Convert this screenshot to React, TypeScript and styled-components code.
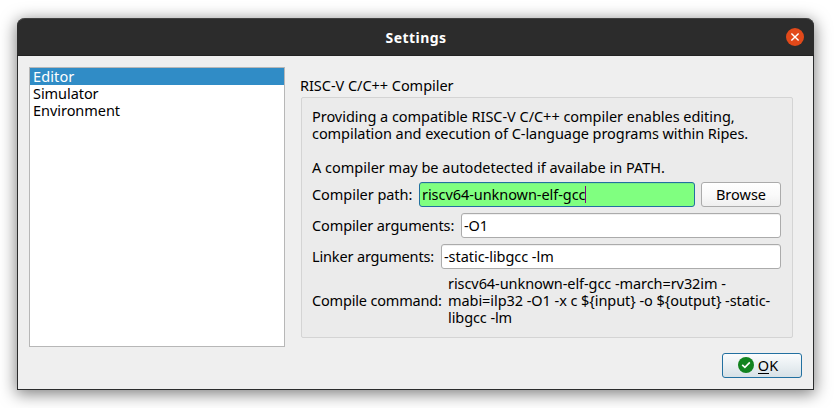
import React from "react";
import styled, { createGlobalStyle } from "styled-components";

const GlobalStyle = createGlobalStyle`
  * { box-sizing: border-box; }
  body {
    margin: 0;
    background: #fff;
    overflow: hidden;
  }
`;

const Desktop = styled.div`
  display: flex;
  width: 835px;
  height: 408px;
  padding: 18px 0 0 17px;
  overflow: hidden;
  background: #fff;
  font: 14.5px/17px "Noto Sans", sans-serif;
  color: #000;
`;

const Window = styled.main`
  display: flex;
  flex-direction: column;
  width: 797px;
  height: 372px;
  border: 1px solid #2b2c2d;
  border-top: 0;
  border-radius: 8px 8px 0 0;
  background: #efefef;
  box-shadow: 0 3px 16px 1px rgba(0, 0, 0, 0.5);
`;

const TitleBar = styled.header`
  display: grid;
  grid-template-columns: 38px 1fr 38px;
  place-items: center;
  flex: none;
  height: 38px;
  margin: 0 -1px;
  border-top: 1px solid #414141;
  border-bottom: 1px solid #222;
  border-radius: 8px 8px 0 0;
  background: #2c2c2c;
`;

const WindowTitle = styled.h1`
  grid-column: 2;
  margin: 0 0 0 1px;
  font-size: 14px;
  line-height: 17px;
  font-weight: 700;
  letter-spacing: 0.45px;
  color: #fff;
`;

const CloseButton = styled.button`
  display: flex;
  width: 18px;
  height: 18px;
  margin: 0 1px 0 0;
  padding: 0;
  border: 0;
  background: none;
`;

const Body = styled.div`
  display: flex;
  gap: 16px;
  height: 291px;
  padding: 11px 20px 0 11px;
`;

const SectionList = styled.ul`
  flex: none;
  width: 256px;
  height: 280px;
  margin: 0;
  padding: 0;
  border: 1px solid #b7b7b7;
  background: #fff;
  list-style: none;
`;

const SectionItem = styled.li<{ $selected?: boolean }>`
  height: 17px;
  padding-left: 3px;
  background: ${(p) => (p.$selected ? "#308cc6" : "transparent")};
  color: ${(p) => (p.$selected ? "#fff" : "#000")};
`;

const Text = styled.span<{ $tracking?: number }>`
  display: block;
  flex: none;
  white-space: pre;
  letter-spacing: ${(p) => p.$tracking ?? -0.05}px;
`;

const Page = styled.section`
  display: flex;
  flex-direction: column;
  width: 492px;
  padding-top: 10px;
`;

const GroupTitle = styled.h2`
  margin: 0 0 3px -1px;
  font-size: inherit;
  font-weight: 400;
`;

const Group = styled.div`
  display: flex;
  flex-direction: column;
  gap: 6px;
  height: 241px;
  padding: 10px 11px 0 10px;
  border: 1px solid #d4d4d4;
  border-radius: 2px;
  background: #ebebeb;
`;

const Lines = styled.div`
  display: flex;
  flex-direction: column;
`;

const CommandLines = styled(Lines)`
  flex: none;
  width: 333px;
`;

const Gap = styled.div`
  height: 17px;
`;

const Row = styled.div`
  display: flex;
  align-items: center;
  justify-content: space-between;
`;

const Field = styled.div<{ $width: number; $valid?: boolean }>`
  display: flex;
  align-items: center;
  flex: none;
  width: ${(p) => p.$width}px;
  height: 25px;
  padding-left: 2px;
  border: 1px solid ${(p) => (p.$valid ? "#2270a0" : "#ababab")};
  border-radius: 3px;
  background: ${(p) => (p.$valid ? "#80ff80" : "#fff")};
  box-shadow: ${(p) => (p.$valid ? "inset 0 1px #76ec83" : "inset 0 1px #f0f0f0")};
`;

const Caret = styled.i`
  width: 1px;
  height: 17px;
  background: #800080;
`;

const PathControls = styled.div`
  display: flex;
  gap: 6px;
`;

const Button = styled.button<{ $default?: boolean }>`
  display: flex;
  align-items: center;
  justify-content: center;
  gap: 4px;
  width: 80px;
  height: 25px;
  padding: 0;
  border: 1px solid ${(p) => (p.$default ? "#2270a0" : "#ababab")};
  border-radius: 3px;
  background: ${(p) =>
    p.$default
      ? "linear-gradient(#fbfcfd, #e9eff2 50%, #d7e1e6)"
      : "linear-gradient(#fff, #fafafa 50%, #efefef)"};
  font: inherit;
  color: #000;
`;

const Footer = styled.footer`
  display: flex;
  justify-content: flex-end;
  padding: 6px 11px 0 0;
`;

const OkIcon = styled.svg`
  margin: -1px 0 0 -8px;
`;

const Mnemonic = styled.span`
  display: inline-block;
  height: 17px;
  border-bottom: 1px solid #000;
`;

const sections = [
  { name: "Editor", tracking: 0.12 },
  { name: "Simulator", tracking: -0.06 },
  { name: "Environment", tracking: -0.04 },
];

export default function App() {
  return (
    <>
      <GlobalStyle />
      <Desktop>
        <Window>
          <TitleBar>
            <WindowTitle>Settings</WindowTitle>
            <CloseButton aria-label="Close">
              <svg width="18" height="18" viewBox="0 0 18 18">
                <circle cx="9" cy="9" r="9" fill="#e2491a" />
                <path d="M5.4 5.4l7.2 7.2M12.6 5.4l-7.2 7.2" stroke="#fff" strokeWidth="1.4" />
              </svg>
            </CloseButton>
          </TitleBar>
          <Body>
            <SectionList>
              {sections.map((s, i) => (
                <SectionItem key={s.name} $selected={i === 0}>
                  <Text $tracking={s.tracking}>{s.name}</Text>
                </SectionItem>
              ))}
            </SectionList>
            <Page>
              <GroupTitle>
                <Text $tracking={-0.04}>RISC-V C/C++ Compiler</Text>
              </GroupTitle>
              <Group>
                <Lines>
                  <Text $tracking={-0.03}>Providing a compatible RISC-V C/C++ compiler enables editing,</Text>
                  <Text $tracking={-0.06}>compilation and execution of C-language programs within Ripes.</Text>
                  <Gap />
                  <Text $tracking={-0.005}>A compiler may be autodetected if availabe in PATH.</Text>
                </Lines>
                <Row>
                  <Text $tracking={-0.05}>Compiler path:</Text>
                  <PathControls>
                    <Field $width={276} $valid>
                      <Text $tracking={-0.06}>riscv64-unknown-elf-gcc</Text>
                      <Caret />
                    </Field>
                    <Button>
                      <Text $tracking={0}>Browse</Text>
                    </Button>
                  </PathControls>
                </Row>
                <Row>
                  <Text $tracking={-0.12}>Compiler arguments:</Text>
                  <Field $width={320}>
                    <Text $tracking={-0.1}>-O1</Text>
                  </Field>
                </Row>
                <Row>
                  <Text $tracking={-0.15}>Linker arguments:</Text>
                  <Field $width={340}>
                    <Text $tracking={-0.05}>-static-libgcc -lm</Text>
                  </Field>
                </Row>
                <Row>
                  <Text $tracking={-0.18}>Compile command:</Text>
                  <CommandLines>
                    <Text $tracking={-0.07}>riscv64-unknown-elf-gcc -march=rv32im -</Text>
                    <Text $tracking={-0.06}>{"mabi=ilp32 -O1 -x c ${input} -o ${output} -static-"}</Text>
                    <Text $tracking={-0.09}>libgcc -lm</Text>
                  </CommandLines>
                </Row>
              </Group>
            </Page>
          </Body>
          <Footer>
            <Button $default>
              <OkIcon width="16" height="16" viewBox="0 0 16 16">
                <circle cx="8" cy="8" r="8" fill="#12831f" />
                <path d="M4.2 7.8l2.7 2.6 4.9-5" fill="none" stroke="#fff" strokeWidth="1.6" />
              </OkIcon>
              <Text $tracking={0.1}>
                <Mnemonic>O</Mnemonic>K
              </Text>
            </Button>
          </Footer>
        </Window>
      </Desktop>
    </>
  );
}
